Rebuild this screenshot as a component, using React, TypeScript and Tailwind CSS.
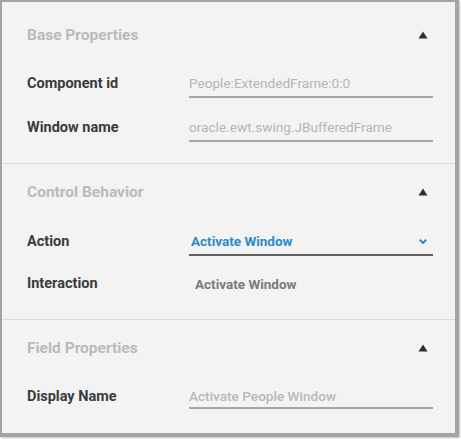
import React from "react";

const Tri = () => (
  <svg width="10" height="8" viewBox="0 0 10 8" className="block">
    <path d="M5 0.5 L9.5 7.5 L0.5 7.5 Z" fill="#2e2e2e" />
  </svg>
);

const Chevron = () => (
  <svg width="8" height="5" viewBox="0 0 8 5" className="block">
    <path d="M0.8 0.8 L4 4 L7.2 0.8" fill="none" stroke="#2a8ad2" strokeWidth="2" />
  </svg>
);

function Header({ title }: { title: string }) {
  return (
    <div className="flex h-[20px] items-center justify-between pl-[25px] pr-[27px]">
      <span className="text-[15.5px] font-bold leading-[20px] text-[#bababa]">{title}</span>
      <Tri />
    </div>
  );
}

function InputRow({ label, value, top }: { label: string; value: string; top: string }) {
  return (
    <div className={`flex items-start ${top}`}>
      <div className="w-[187px] pl-[25px] pt-[1px] text-[14.5px] font-bold leading-[20px] text-[#3b3b3b]">
        {label}
      </div>
      <div className="w-[244px] border-b-2 border-[#a6a6a6] pb-[3px] text-[13.6px] leading-[20px] text-[#b5b5b5]">
        {value}
      </div>
    </div>
  );
}

export default function App() {
  return (
    <div className="h-[439px] w-[461px] bg-white" style={{ fontFamily: "Roboto, 'Liberation Sans', sans-serif" }}>
      <div className="h-[437px] w-[459px] border-b-[4px] border-l-2 border-r-[4px] border-t-2 border-[#a4a4a4] bg-[#f3f3f3] shadow-[1px_1px_2px_rgba(0,0,0,0.25)]">
        <div className="border-b border-[#dcdcdc] pb-[21px] pt-[23px]">
          <Header title="Base Properties" />
          <InputRow label="Component id" value="People:ExtendedFrame:0:0" top="mt-[28px]" />
          <InputRow label="Window name" value="oracle.ewt.swing.JBufferedFrame" top="mt-[19px]" />
        </div>
        <div className="border-b border-[#dcdcdc] pb-[25px] pt-[18px]">
          <Header title="Control Behavior" />
          <div className="mt-[29px] flex items-start">
            <div className="w-[187px] pl-[25px] pt-[1px] text-[14.5px] font-bold leading-[20px] text-[#3b3b3b]">
              Action
            </div>
            <div className="flex w-[244px] items-center justify-between border-b-2 border-[#5e5e5e] pb-[3px] pl-[2px] pr-[6px]">
              <span className="text-[13.5px] font-bold leading-[20px] text-[#2a8ad2]">Activate Window</span>
              <Chevron />
            </div>
          </div>
          <div className="mt-[18px] flex items-start">
            <div className="w-[187px] pl-[25px] text-[14.5px] font-bold leading-[20px] text-[#3b3b3b]">
              Interaction
            </div>
            <div className="pl-[6px] text-[13.5px] font-bold leading-[20px] text-[#7a7a7a]">Activate Window</div>
          </div>
        </div>
        <div className="pt-[18px]">
          <Header title="Field Properties" />
          <div className="mt-[28px] flex items-start">
            <div className="w-[187px] pl-[25px] pt-[1px] text-[14.5px] font-bold leading-[20px] text-[#3b3b3b]">
              Display Name
            </div>
            <div className="w-[244px] border-b-2 border-[#a6a6a6] pb-[1px] text-[13.6px] font-medium leading-[20px] text-[#b9b9b9]">
              Activate People Window
            </div>
          </div>
        </div>
      </div>
    </div>
  );
}
